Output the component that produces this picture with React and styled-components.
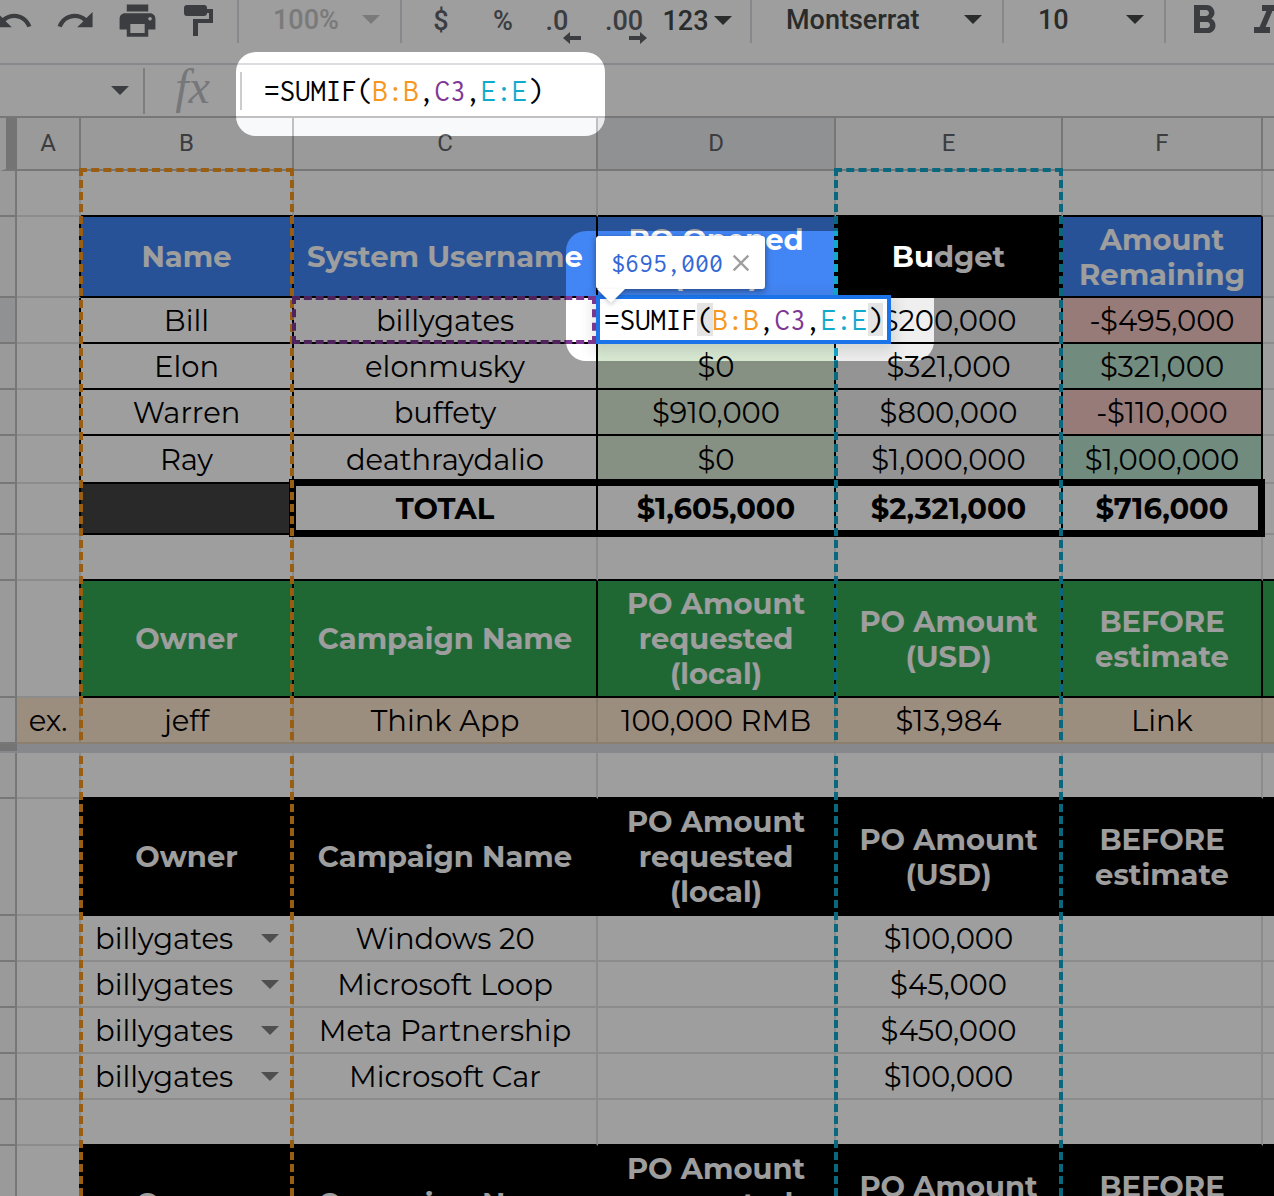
import React from 'react'
import styled, { createGlobalStyle } from 'styled-components';
import { MdUndo, MdRedo, MdPrint, MdFormatBold, MdFormatItalic, MdClose } from 'react-icons/md';

const GlobalStyle = createGlobalStyle`
    *, *::before, *::after {
        box-sizing: border-box;
    }

    body {
        margin: 0;
        background: #fff;
        font-family: Roboto, sans-serif;
    }

    button, select {
        font: inherit;
        color: inherit;
        border: 0;
        padding: 0;
        margin: 0;
        background: none;
    }
`;

const GRID = '#e2e3e3';
const BLACK = '#000';
const BLUE = '#4285f4';
const GREEN = '#34a853';
const SAND = '#fce5cd';
const SAND_LINE = '#e0cdb4';
const RED_TINT = '#f4c7c3';
const GREEN_TINT = '#b7e1cd';
const PALE_GREEN = '#d9ead3';
const PALE_GREY = '#efefef';
const ORANGE = '#f7981d';
const PURPLE = '#7e3794';
const CYAN = '#11a9cc';

const poHeads = ['Owner', 'Campaign Name', 'PO Amount\nrequested\n(local)', 'PO Amount\n(USD)', 'BEFORE\nestimate'];

const people = [
    { name: 'Bill', user: 'billygates', opened: '', budget: '$200,000', left: '-$495,000', over: true, editing: true },
    { name: 'Elon', user: 'elonmusky', opened: '$0', budget: '$321,000', left: '$321,000' },
    { name: 'Warren', user: 'buffety', opened: '$910,000', budget: '$800,000', left: '-$110,000', over: true },
    { name: 'Ray', user: 'deathraydalio', opened: '$0', budget: '$1,000,000', left: '$1,000,000' },
];

const campaigns = [
    { owner: 'billygates', name: 'Windows 20', amount: '$100,000' },
    { owner: 'billygates', name: 'Microsoft Loop', amount: '$45,000' },
    { owner: 'billygates', name: 'Meta Partnership', amount: '$450,000' },
    { owner: 'billygates', name: 'Microsoft Car', amount: '$100,000' },
];

const Caret = () => (
    <CaretIcon viewBox='0 0 18 9' aria-hidden='true'>
        <path d='M0 0h18l-9 9z' fill='currentColor' />
    </CaretIcon>
);

const PaintRoller = () => (
    <svg width='30' height='32' viewBox='0 0 30 32' aria-hidden='true'>
        <path d='M3 0h17a3 3 0 0 1 3 3v1h6v14H14v13H9V14h16V8h-2a3 3 0 0 1-3 3H3a3 3 0 0 1-3-3V3a3 3 0 0 1 3-3z' fill='currentColor' />
    </svg>
);

const DecimalArrow = ({ flip }) => (
    <ArrowIcon viewBox='0 0 18 12' $flip={flip} aria-hidden='true'>
        <path d='M0 6l7-6v4h11v4H7v4z' fill='currentColor' />
    </ArrowIcon>
);

const Formula = ({ highlight }) => (
    <>
        =SUMIF<Paren $on={highlight}>(</Paren><Ref $color={ORANGE}>B:B</Ref>,<Ref $color={PURPLE}>C3</Ref>,<Ref $color={CYAN}>E:E</Ref><Paren $on={highlight}>)</Paren>
    </>
);

// blank row whose lower edge is the top line of the block under it
const LeadRow = ({ wide }) => (
    <tr>
        <RowHead />
        <Cell />
        {[0, 1, 2, 3, 4].map((i) => <Cell key={i} $bottom={BLACK} />)}
        <Cell $bottom={wide && BLACK} />
    </tr>
);

const BlockHeads = ({ fill }) => (
    <tr>
        <RowHead $height={117} />
        <Cell $right={BLACK} />
        {poHeads.map((text) => (
            <Cell key={text} $bold $fill={fill} $ink='#fff' $right={BLACK} $bottom={BLACK}>{text}</Cell>
        ))}
        <Cell $fill={fill} $bottom={BLACK} />
    </tr>
);

const App = () => {
    return (
        <Page>
            <GlobalStyle />

            <Toolbar>
                <Group $width={257}>
                    <Tool aria-label='Undo'><MdUndo size={41} /></Tool>
                    <Tool aria-label='Redo'><MdRedo size={41} /></Tool>
                    <Tool aria-label='Print'><MdPrint size={43} /></Tool>
                    <Tool aria-label='Paint format'><PaintRoller /></Tool>
                </Group>
                <Group $width={163}>
                    <Picker $muted>
                        <select aria-label='Zoom' defaultValue='100%'><option>100%</option></select>
                        <Caret />
                    </Picker>
                </Group>
                <Group $width={350} $inset={8}>
                    <Tool aria-label='Format as currency'>$</Tool>
                    <Tool aria-label='Format as percent'>%</Tool>
                    <Tool aria-label='Decrease decimal places'><Decimal>.0<DecimalArrow /></Decimal></Tool>
                    <Tool aria-label='Increase decimal places'><Decimal $wide>.00<DecimalArrow flip /></Decimal></Tool>
                    <WideTool aria-label='More formats'>123<Caret /></WideTool>
                </Group>
                <Group $width={252}>
                    <Picker>
                        <select aria-label='Font' defaultValue='Montserrat'><option>Montserrat</option></select>
                        <Caret />
                    </Picker>
                </Group>
                <Group $width={162}>
                    <Picker>
                        <select aria-label='Font size' defaultValue='10'><option>10</option></select>
                        <Caret />
                    </Picker>
                </Group>
                <Group $inset={7}>
                    <Tool aria-label='Bold'><MdFormatBold size={48} /></Tool>
                    <Tool aria-label='Italic'><MdFormatItalic size={48} /></Tool>
                </Group>
            </Toolbar>

            <FormulaBar>
                <NameBox aria-label='Name box'><Caret /></NameBox>
                <Fx>fx</Fx>
                <FormulaInput role='textbox' aria-label='Formula' contentEditable suppressContentEditableWarning>
                    <Formula />
                </FormulaInput>
            </FormulaBar>

            <Sheet>
                <colgroup>
                    <Col $width={17} />
                    <Col $width={64} />
                    <Col $width={213} />
                    <Col $width={304} />
                    <Col $width={238} />
                    <Col $width={227} />
                    <Col $width={200} />
                    <col />
                </colgroup>
                <thead>
                    <tr>
                        <Corner />
                        <ColHead>A</ColHead>
                        <ColHead>B<ColumnRange $color={ORANGE} /></ColHead>
                        <ColHead>C</ColHead>
                        <ColHead $active>D</ColHead>
                        <ColHead>E<ColumnRange $color={CYAN} /></ColHead>
                        <ColHead>F</ColHead>
                        <ColHead />
                    </tr>
                </thead>
                <tbody>
                    <LeadRow />
                    <tr>
                        <RowHead $height={81} />
                        <Cell $right={BLACK} />
                        <Cell $bold $fill={BLUE} $ink='#fff' $right={BLACK} $bottom={BLACK}>Name</Cell>
                        <Cell $bold $fill={BLUE} $ink='#fff' $right={BLACK} $bottom={BLACK}>System Username</Cell>
                        <Cell $bold $fill={BLUE} $ink='#fff' $right={BLACK} $bottom={BLACK}>{'PO Opened\n(USD)'}</Cell>
                        <Cell $bold $fill={BLACK} $ink='#fff' $right={BLACK} $bottom={BLACK}>Budget</Cell>
                        <Cell $bold $fill={BLUE} $ink='#fff' $right={BLACK} $bottom={BLACK}>{'Amount\nRemaining'}</Cell>
                        <Cell />
                    </tr>
                    {people.map((p, i) => (
                        <tr key={p.name}>
                            <RowHead $active={p.editing} $height={i === 3 ? 48 : 46} />
                            <Cell $right={BLACK} />
                            <Cell $right={BLACK} $bottom={BLACK}>{p.name}</Cell>
                            <Cell $right={BLACK} $bottom={BLACK}>
                                {p.user}
                                {p.editing && <CellRange />}
                            </Cell>
                            <Cell $fill={PALE_GREEN} $right={BLACK} $bottom={BLACK}>
                                {p.opened}
                                {p.editing && (
                                    <>
                                        <Editor role='textbox' aria-label='Cell D3' contentEditable suppressContentEditableWarning>
                                            <Formula highlight />
                                        </Editor>
                                        <Preview>
                                            $695,000
                                            <button aria-label='Close preview'><MdClose size={28} /></button>
                                        </Preview>
                                    </>
                                )}
                            </Cell>
                            <Cell $fill={PALE_GREY} $right={BLACK} $bottom={BLACK}>{p.budget}</Cell>
                            <Cell $fill={p.over ? RED_TINT : GREEN_TINT} $right={BLACK} $bottom={BLACK}>{p.left}</Cell>
                            <Cell />
                        </tr>
                    ))}
                    <tr>
                        <RowHead $height={51} />
                        <Cell $right={BLACK} />
                        <Cell $fill='#434343' $right={BLACK} $bottom={BLACK} />
                        <Cell $bold $right={BLACK} $bottom={BLACK}>TOTAL<TotalFrame /></Cell>
                        <Cell $bold $right={BLACK} $bottom={BLACK}>$1,605,000</Cell>
                        <Cell $bold $right={BLACK} $bottom={BLACK}>$2,321,000</Cell>
                        <Cell $bold $right={BLACK} $bottom={BLACK}>$716,000</Cell>
                        <Cell />
                    </tr>
                    <LeadRow wide />
                    <BlockHeads fill={GREEN} />
                    <tr>
                        <RowHead />
                        {['ex.', 'jeff', 'Think App', '100,000 RMB', '$13,984', 'Link', ''].map((text) => (
                            <Cell key={text} $fill={SAND} $right={SAND_LINE} $bottom={SAND_LINE}>{text}</Cell>
                        ))}
                    </tr>
                    <tr>
                        <FreezeHandle />
                        <FreezeBar colSpan={7} />
                    </tr>
                    <LeadRow wide />
                    <BlockHeads fill={BLACK} />
                    {campaigns.map((c) => (
                        <tr key={c.name}>
                            <RowHead />
                            <Cell />
                            <Cell>
                                <Owner>
                                    <select aria-label={`Owner of ${c.name}`} defaultValue={c.owner}>
                                        <option>{c.owner}</option>
                                    </select>
                                    <Caret />
                                </Owner>
                            </Cell>
                            <Cell>{c.name}</Cell>
                            <Cell />
                            <Cell>{c.amount}</Cell>
                            <Cell />
                            <Cell />
                        </tr>
                    ))}
                    <LeadRow wide />
                    <BlockHeads fill={BLACK} />
                </tbody>
            </Sheet>

            <Shade />
        </Page>
    )
}


const Page = styled.main`
    position: relative;
    height: 100vh;
    overflow: hidden;
    background: #fff;
`;

const Toolbar = styled.div`
    display: flex;
    align-items: flex-start;
    height: 65px;
    margin-left: -18px;
    border-bottom: 2px solid #dadce0;
    color: #5f6368;
    font-size: 27px;
    font-weight: 500;
`;

const Group = styled.div`
    display: flex;
    align-items: center;
    flex: none;
    width: ${({ $width }) => ($width ? `${$width}px` : 'auto')};
    height: 43px;
    padding-left: ${({ $inset }) => $inset || 0}px;
    border-right: 2px solid #dadce0;

    &:last-child {
        border-right: 0;
    }
`;

const Tool = styled.button`
    display: flex;
    align-items: center;
    justify-content: center;
    flex: none;
    width: 62px;
    height: 43px;
    padding-bottom: 2px;
`;

const WideTool = styled(Tool)`
    width: 78px;
    gap: 5px;
    color: #444746;
`;

const CaretIcon = styled.svg`
    flex: none;
    width: 18px;
    height: 9px;
`;

const ArrowIcon = styled.svg`
    position: absolute;
    right: ${({ $flip }) => ($flip ? -4 : -13)}px;
    bottom: -7px;
    width: 18px;
    height: 12px;
    transform: ${({ $flip }) => ($flip ? 'scaleX(-1)' : 'none')};
`;

const Decimal = styled.span`
    position: relative;
    margin-right: ${({ $wide }) => ($wide ? 6 : 16)}px;
`;

const Picker = styled.label`
    display: flex;
    align-items: center;
    justify-content: space-between;
    width: 100%;
    padding: 0 20px 4px 34px;
    color: ${({ $muted }) => ($muted ? '#c6c6c6' : '#444746')};

    & select {
        appearance: none;
        opacity: 1;
    }
`;

const FormulaBar = styled.div`
    display: flex;
    align-items: center;
    height: 53px;
    border-bottom: 2px solid #c0c0c0;
    color: #5f6368;
`;

const NameBox = styled.button`
    display: flex;
    align-items: center;
    justify-content: flex-end;
    width: 145px;
    height: 46px;
    padding-right: 14px;
    border-right: 2px solid #cccccc;
`;

const Fx = styled.span`
    width: 95px;
    padding-bottom: 8px;
    color: #bdc1c6;
    font-family: "Liberation Serif", serif;
    font-size: 48px;
    font-style: italic;
    line-height: 44px;
    text-align: center;
`;

const FormulaInput = styled.div`
    flex: 1;
    height: 38px;
    padding-left: 22px;
    border-left: 2px solid #cccccc;
    outline: 0;
    color: #000;
    font-family: Inconsolata, "DejaVu Sans Mono", monospace;
    font-size: 31px;
    line-height: 38px;
    white-space: nowrap;
`;

const Ref = styled.span`
    color: ${({ $color }) => $color};
`;

const Paren = styled.span`
    background: ${({ $on }) => ($on ? '#e4e4e4' : 'none')};
`;

const Sheet = styled.table`
    width: 100%;
    table-layout: fixed;
    border-collapse: separate;
    border-spacing: 0;
`;

const Col = styled.col`
    width: ${({ $width }) => $width}px;
`;

const ColHead = styled.th`
    position: relative;
    height: 53px;
    padding: 0 0 2px;
    border-right: 2px solid #c0c0c0;
    border-bottom: 2px solid #c0c0c0;
    background: ${({ $active }) => ($active ? '#e8eaed' : '#f8f9fa')};
    color: #5f6368;
    font-size: 24px;
    font-weight: 400;

    &:last-child {
        border-right: 0;
    }
`;

const Corner = styled(ColHead)`
    border-left: 6px solid #f8f9fa;
    border-right-color: #bcbcbc;
    background: #bcbcbc;
`;

const RowHead = styled.th`
    height: ${({ $height }) => $height || 46}px;
    padding: 0;
    border-right: 2px solid #c0c0c0;
    border-bottom: 2px solid #c0c0c0;
    background: ${({ $active }) => ($active ? '#e8eaed' : '#f8f9fa')};
`;

const Cell = styled.td`
    position: relative;
    padding: 0;
    border-right: 2px solid ${({ $right }) => $right || GRID};
    border-bottom: 2px solid ${({ $bottom }) => $bottom || GRID};
    background: ${({ $fill }) => $fill || '#fff'};
    color: ${({ $ink }) => $ink || '#000'};
    font-family: Montserrat, Inter, sans-serif;
    font-size: 29px;
    font-weight: ${({ $bold }) => ($bold ? 700 : 400)};
    line-height: 35px;
    text-align: center;
    white-space: pre;

    &:last-child {
        border-right: 0;
    }
`;

const FreezeHandle = styled.th`
    height: 9px;
    padding: 0;
    border-bottom: 2px solid #dadce0;
    background: #bcbcbc;
`;

const FreezeBar = styled.td`
    position: relative;
    z-index: 3;
    padding: 0;
    background: #dadce0;
`;

const Owner = styled.label`
    display: flex;
    align-items: center;
    justify-content: space-between;
    padding: 0 13px 0 14px;

    & select {
        appearance: none;
    }

    & svg {
        color: #808080;
    }
`;

// marching outline down a whole column
const ColumnRange = styled.span`
    position: absolute;
    z-index: 2;
    top: 50px;
    left: -2px;
    right: -2px;
    height: 2000px;
    border: 4px dashed ${({ $color }) => $color};
    pointer-events: none;
`;

const CellRange = styled.span`
    position: absolute;
    z-index: 3;
    inset: -2px 0 -2px -2px;
    border: 4px dashed ${PURPLE};
    pointer-events: none;
`;

const TotalFrame = styled.span`
    position: absolute;
    z-index: 1;
    top: -5px;
    left: -5px;
    width: 976px;
    height: 58px;
    border: 7px solid #000;
    pointer-events: none;
`;

const Editor = styled.div`
    position: absolute;
    z-index: 4;
    top: -3px;
    left: -2px;
    height: 49px;
    padding: 0 4px;
    border: 4px solid #1a73e8;
    outline: 0;
    background: #fff;
    box-shadow: 0 4px 12px 4px rgba(60, 64, 67, 0.15);
    color: #000;
    font-family: Inconsolata, "DejaVu Sans Mono", monospace;
    font-size: 31px;
    line-height: 42px;
    white-space: nowrap;
`;

const Preview = styled.div`
    position: absolute;
    z-index: 5;
    bottom: 53px;
    left: -2px;
    display: flex;
    align-items: center;
    gap: 4px;
    height: 53px;
    padding: 0 10px 0 15px;
    border-radius: 3px;
    background: #fff;
    box-shadow: 0 2px 6px rgba(0, 0, 0, 0.45);
    color: #3367d6;
    font-family: Inconsolata, "DejaVu Sans Mono", monospace;
    font-size: 28px;

    & button {
        display: flex;
        color: #9e9e9e;
    }

    &::after {
        content: "";
        position: absolute;
        top: 100%;
        left: 1px;
        border: 14px solid transparent;
        border-top-color: #fff;
        border-bottom: 0;
        filter: drop-shadow(0 2px 2px rgba(0, 0, 0, 0.2));
    }
`;

// darkens everything except the formula bar and the edited cell
const Shade = styled.div`
    position: absolute;
    z-index: 10;
    inset: 0;
    background: rgba(0, 0, 0, 0.38);
    pointer-events: none;
    clip-path: path(evenodd, "M0 0H9999V9999H0Z M256 52H585A20 20 0 0 1 605 72V116A20 20 0 0 1 585 136H256A20 20 0 0 1 236 116V72A20 20 0 0 1 256 52Z M586 231H914A20 20 0 0 1 934 251V341A20 20 0 0 1 914 361H586A20 20 0 0 1 566 341V251A20 20 0 0 1 586 231Z");
`;

export default App
